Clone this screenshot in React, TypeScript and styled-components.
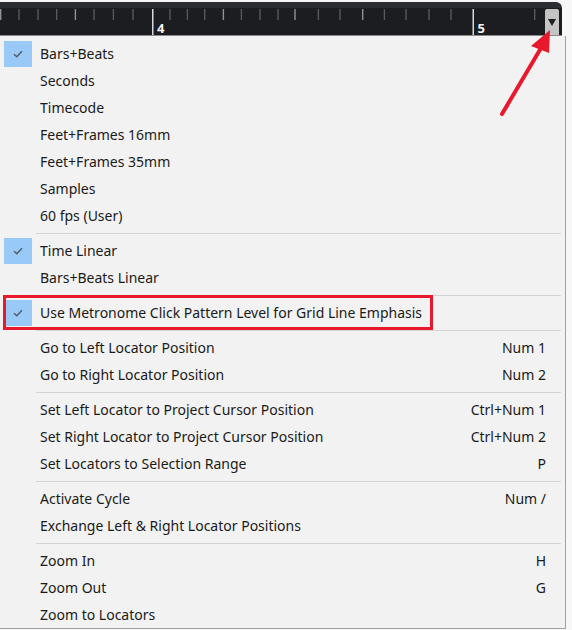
import React from "react";
import styled, { createGlobalStyle } from "styled-components";

const GlobalStyle = createGlobalStyle`
  html, body {
    margin: 0;
    padding: 0;
    background: #f7f7f7;
  }
  body {
    font-family: "Noto Sans", "Open Sans", sans-serif;
    -webkit-font-smoothing: antialiased;
  }
`;

type Entry =
  | { kind: "item"; label: string; shortcut?: string; checked?: boolean; marked?: boolean }
  | { kind: "sep" };

const entries: Entry[] = [
  { kind: "item", label: "Bars+Beats", checked: true },
  { kind: "item", label: "Seconds" },
  { kind: "item", label: "Timecode" },
  { kind: "item", label: "Feet+Frames 16mm" },
  { kind: "item", label: "Feet+Frames 35mm" },
  { kind: "item", label: "Samples" },
  { kind: "item", label: "60 fps (User)" },
  { kind: "sep" },
  { kind: "item", label: "Time Linear", checked: true },
  { kind: "item", label: "Bars+Beats Linear" },
  { kind: "sep" },
  {
    kind: "item",
    label: "Use Metronome Click Pattern Level for Grid Line Emphasis",
    checked: true,
    marked: true,
  },
  { kind: "sep" },
  { kind: "item", label: "Go to Left Locator Position", shortcut: "Num 1" },
  { kind: "item", label: "Go to Right Locator Position", shortcut: "Num 2" },
  { kind: "sep" },
  { kind: "item", label: "Set Left Locator to Project Cursor Position", shortcut: "Ctrl+Num 1" },
  { kind: "item", label: "Set Right Locator to Project Cursor Position", shortcut: "Ctrl+Num 2" },
  { kind: "item", label: "Set Locators to Selection Range", shortcut: "P" },
  { kind: "sep" },
  { kind: "item", label: "Activate Cycle", shortcut: "Num /" },
  { kind: "item", label: "Exchange Left & Right Locator Positions" },
  { kind: "sep" },
  { kind: "item", label: "Zoom In", shortcut: "H" },
  { kind: "item", label: "Zoom Out", shortcut: "G" },
  { kind: "item", label: "Zoom to Locators" },
];

// ruler graduation positions (px), measured from the screen
const minorTicks = [
  { x: 0, bright: true },
  { x: 18.3 },
  { x: 37.3 },
  { x: 56 },
  { x: 74.7, bright: true },
  { x: 93.3 },
  { x: 112.7 },
  { x: 132.3 },
  { x: 169.3 },
  { x: 186.7 },
  { x: 204 },
  { x: 222.7, bright: true },
  { x: 240.7 },
  { x: 259.3 },
  { x: 277.3 },
  { x: 294.3, bright: true },
  { x: 317.7 },
  { x: 339.3 },
  { x: 362, bright: true },
  { x: 383.7 },
  { x: 405.3 },
  { x: 428.3 },
  { x: 450.3 },
  { x: 534 },
];

const bars = [
  { x: 152, label: "4" },
  { x: 472.5, label: "5" },
];

const Page = styled.div`
  position: relative;
  width: 572px;
  height: 630px;
  overflow: hidden;
  padding-top: 2px;
  box-sizing: border-box;
`;

const Ruler = styled.div`
  display: flex;
  align-items: stretch;
  width: 562px;
  height: 34px;
  box-sizing: border-box;
  background: linear-gradient(#2a2d31 0 6px, #1b1d20 6px);
  border-top-right-radius: 6px;
  border-bottom: 1px solid #8c8c8c;
`;

const Scale = styled.svg`
  flex: 1;
  display: block;
  overflow: visible;
`;

const BarLabel = styled.text`
  fill: #f4f4f4;
  font-size: 13px;
  font-weight: 700;
  font-family: "Noto Sans", sans-serif;
`;

const DropButton = styled.div`
  display: flex;
  align-items: center;
  justify-content: center;
  width: 14px;
  margin: 7px 3px 0 2px;
  background: #c4c4c4;
  border-radius: 2px 2px 0 0;
`;

const Triangle = styled.div`
  width: 0;
  height: 0;
  border-left: 4px solid transparent;
  border-right: 4px solid transparent;
  border-top: 7px solid #1e1e1e;
  margin-top: 1px;
`;

const Menu = styled.div`
  width: 566px;
  box-sizing: border-box;
  padding: 4px 0 0;
  background: #f2f2f2;
  border-right: 1px solid #a0a0a0;
  border-bottom: 1px solid #a0a0a0;
  height: 593px;
`;

const Item = styled.div`
  position: relative;
  display: grid;
  grid-template-columns: 40px 1fr auto;
  align-items: center;
  height: 27px;
  padding-right: 19px;
  color: #1a1a1a;
  font-size: 14px;
`;

const CheckCell = styled.div<{ $on?: boolean }>`
  display: flex;
  align-items: center;
  justify-content: center;
  width: 28px;
  height: 26px;
  margin-left: 4px;
  background: ${(p) => (p.$on ? "#99c9f7" : "transparent")};
`;

const Label = styled.span`
  white-space: nowrap;
`;

const Shortcut = styled.span`
  white-space: nowrap;
  text-align: right;
`;

const Separator = styled.div`
  height: 8px;
  display: flex;
  align-items: center;
  padding: 0 4px 0 36px;
  &::after {
    content: "";
    flex: 1;
    height: 1px;
    background: #d4d4d4;
  }
`;

const Highlight = styled.div`
  position: absolute;
  left: 3px;
  top: -4px;
  width: 430px;
  height: 35px;
  box-sizing: border-box;
  border: 3px solid #e8192c;
  pointer-events: none;
`;

const Annotation = styled.svg`
  position: absolute;
  left: 0;
  top: 0;
  pointer-events: none;
`;

const Check = () => (
  <svg width="10" height="8" viewBox="0 0 10 8">
    <path d="M1 4.2 L3.8 6.8 L9 1.2" fill="none" stroke="#555a60" strokeWidth="1.4" />
  </svg>
);

const App = () => {
  return (
    <Page>
      <GlobalStyle />
      <Ruler>
        <Scale viewBox="0 0 543 33" width="543" height="33">
          {minorTicks.map((t, i) => (
            <rect
              key={i}
              x={t.x}
              y={7}
              width={1.4}
              height={11}
              fill={t.bright ? "#8e9297" : "#545960"}
            />
          ))}
          {bars.map((b) => (
            <g key={b.label}>
              <rect x={b.x} y={7} width={1.5} height={26} fill="#d8d8d8" />
              <BarLabel x={b.x + 5} y={30.5}>
                {b.label}
              </BarLabel>
            </g>
          ))}
        </Scale>
        <DropButton>
          <Triangle />
        </DropButton>
      </Ruler>
      <Menu>
        {entries.map((e, i) =>
          e.kind === "sep" ? (
            <Separator key={i} />
          ) : (
            <Item key={i}>
              <CheckCell $on={e.checked}>{e.checked && <Check />}</CheckCell>
              <Label>{e.label}</Label>
              <Shortcut>{e.shortcut}</Shortcut>
              {e.marked && <Highlight />}
            </Item>
          )
        )}
      </Menu>
      <Annotation width="572" height="630" viewBox="0 0 572 630">
        <line x1="502" y1="114" x2="541" y2="48" stroke="#e8192c" strokeWidth="4" strokeLinecap="round" />
        <polygon points="550,30 531,46 549,53" fill="#e8192c" />
      </Annotation>
    </Page>
  );
};

export default App;
